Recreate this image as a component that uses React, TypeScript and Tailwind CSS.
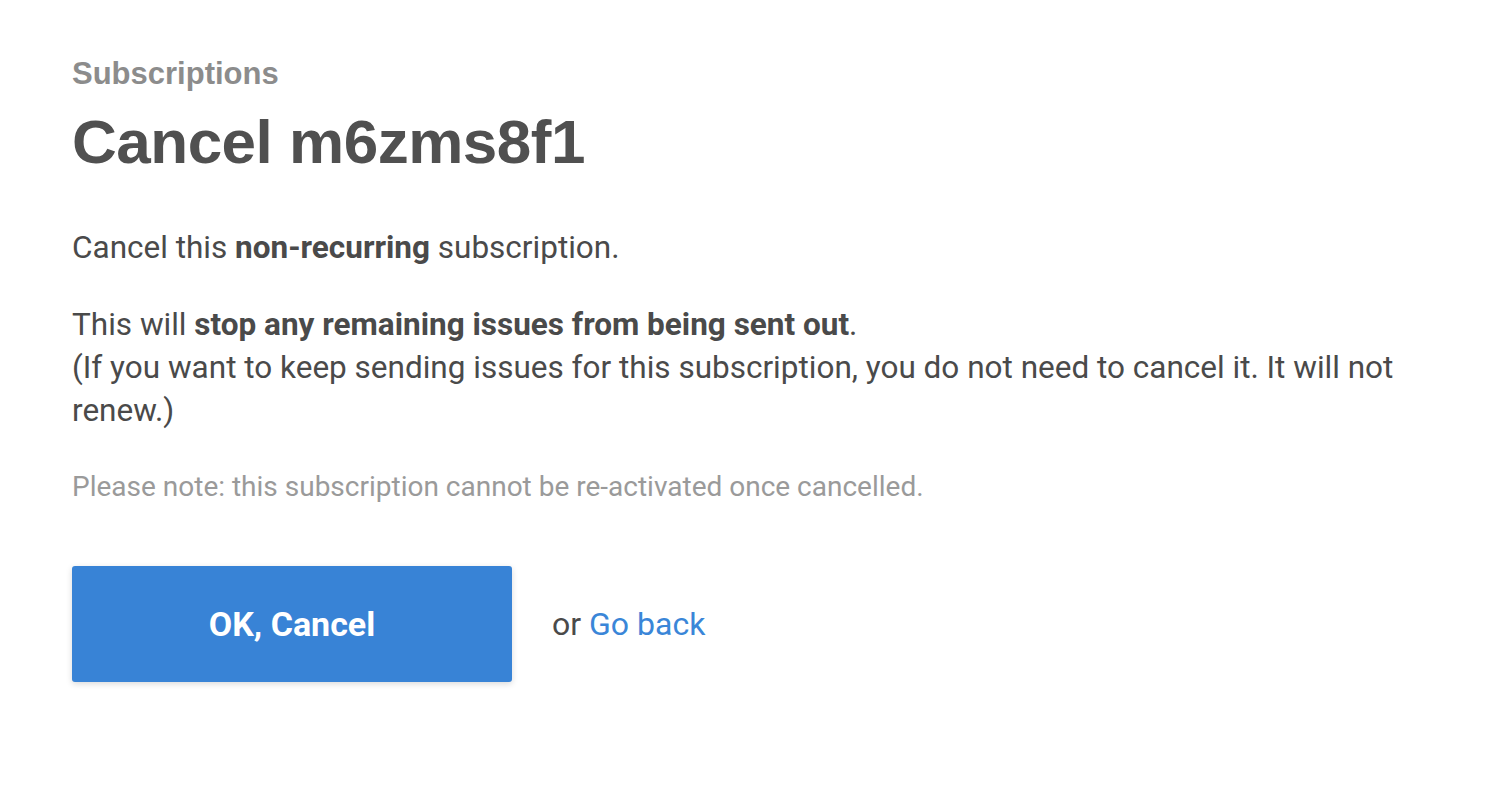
export default function App() {
  return (
    <div className="min-h-screen bg-white px-[72px] pt-[54px] text-[#4a4a4a] font-['Roboto',sans-serif]">
      <p className="font-['Liberation_Sans',Arial,sans-serif] text-[31px] font-bold leading-[40px] text-[#8c8c8c]">
        Subscriptions
      </p>
      <h1 className="mt-[12px] font-['Liberation_Sans',Arial,sans-serif] text-[62px] font-bold leading-[72px] tracking-[-0.5px] text-[#505050]">
        Cancel m6zms8f1
      </h1>
      <p className="mt-[48px] text-[31.5px] leading-[43px]">
        Cancel this <strong className="font-bold">non-recurring</strong> subscription.
      </p>
      <p className="mt-[34px] max-w-[1360px] text-[31.5px] leading-[43px]">
        This will <strong className="font-bold">stop any remaining issues from being sent out</strong>.
        <br />
        (If you want to keep sending issues for this subscription, you do not need to cancel it. It will not
        renew.)
      </p>
      <p className="mt-[37px] text-[28px] leading-[36px] text-[#9a9a9a]">
        Please note: this subscription cannot be re-activated once cancelled.
      </p>
      <div className="mt-[61px] flex items-center gap-[40px]">
        <button className="h-[116px] w-[440px] rounded-[3px] bg-[#3883d6] text-[34px] font-bold text-white shadow-[0_2px_6px_rgba(0,0,0,0.15)]">
          OK, Cancel
        </button>
        <p className="text-[32px]">
          or <a className="text-[#3a86d8]" href="#">Go back</a>
        </p>
      </div>
    </div>
  );
}
